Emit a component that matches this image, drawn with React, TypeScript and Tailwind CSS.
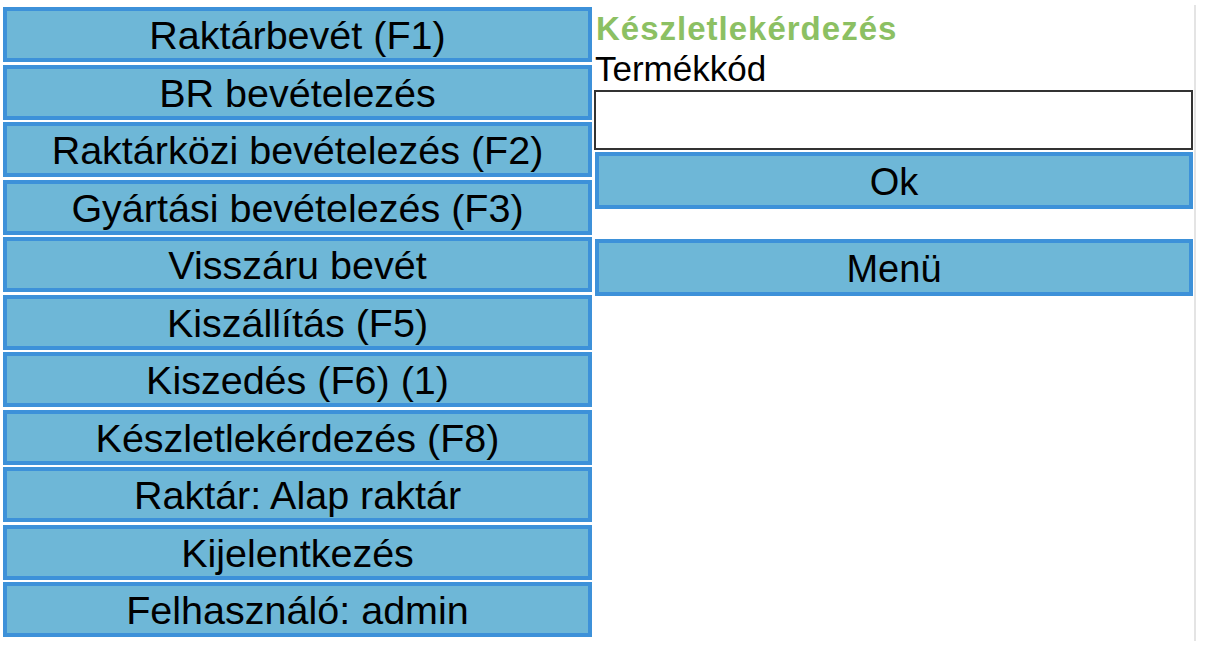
const menu = [
  "Raktárbevét (F1)",
  "BR bevételezés",
  "Raktárközi bevételezés (F2)",
  "Gyártási bevételezés (F3)",
  "Visszáru bevét",
  "Kiszállítás (F5)",
  "Kiszedés (F6) (1)",
  "Készletlekérdezés (F8)",
  "Raktár: Alap raktár",
  "Kijelentkezés",
  "Felhasználó: admin",
];

export default function App() {
  return (
    <div className="flex items-start bg-white w-[1205px] h-[667px] font-['Liberation_Sans',Arial,sans-serif] text-black">
      <ul className="flex flex-col gap-[2.5px] mt-[7px] ml-[3px] w-[589px]">
        {menu.map((m) => (
          <li
            key={m}
            className="h-[55px] pt-[3px] flex items-center justify-center border-4 border-[#3d91d9] bg-[#6eb7d7] text-[39.5px] leading-none"
          >
            {m}
          </li>
        ))}
      </ul>
      <div className="mt-[5px] ml-[2px] w-[602px] h-[636px] border-r-2 border-[#e4e4e4] pr-[1px] flex flex-col">
        <h1 className="text-[#8cc063] font-bold text-[33px] tracking-[1px] leading-[36px] mt-[6px] ml-[2px]">Készletlekérdezés</h1>
        <label className="text-[35px] leading-[40px] mt-[2px] ml-[1px]">Termékkód</label>
        <input className="mt-[1px] h-[60px] border-2 border-[#333] bg-white outline-none px-2 text-[28px]" />
        <button className="mt-[2px] ml-[1px] h-[57px] pt-[3px] border-4 border-[#3d91d9] bg-[#6eb7d7] text-[38px] leading-none">Ok</button>
        <button className="mt-[30px] ml-[1px] h-[57px] pt-[2px] border-4 border-[#3d91d9] bg-[#6eb7d7] text-[38px] leading-none">Menü</button>
      </div>
    </div>
  );
}
